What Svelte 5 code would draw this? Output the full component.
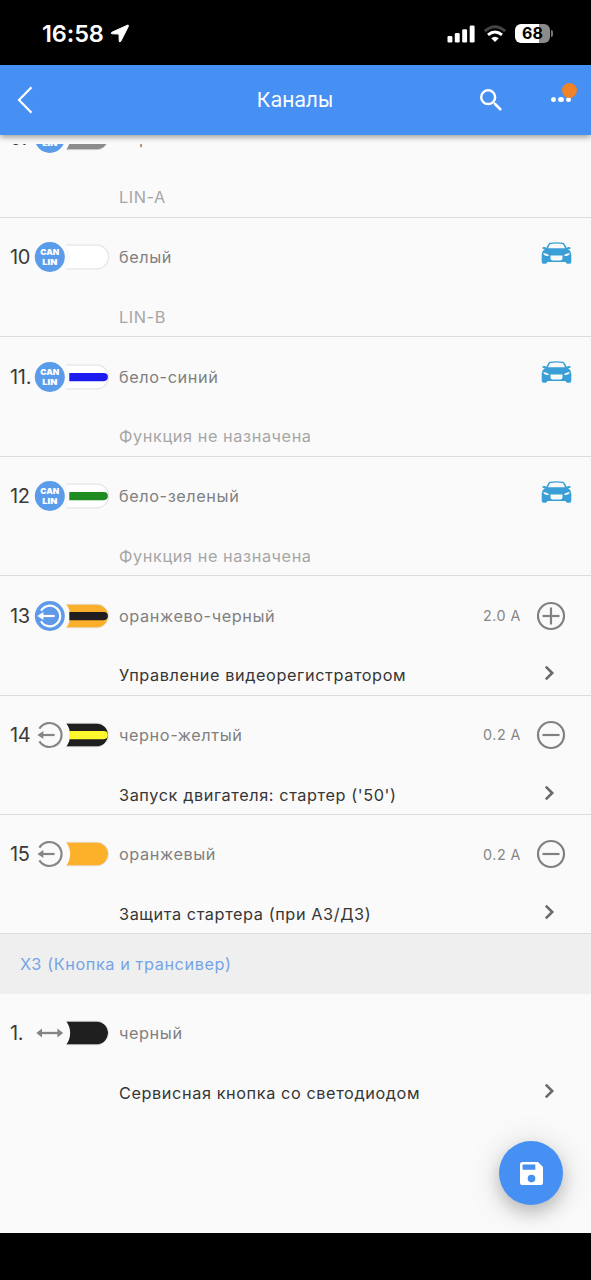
<script lang="ts">
  type Kind = 'can' | 'out-active' | 'out' | 'inout'

  interface Channel {
    num: string
    kind: Kind
    color: string
    stripe?: string
    name: string
    func: string
    car?: boolean
    amps?: string
    sign?: 'plus' | 'minus'
  }

  const channels: Channel[] = [
    { num: '9.', kind: 'can', color: '#8c8c8c', name: 'серый', func: 'LIN-A' },
    { num: '10', kind: 'can', color: '#ffffff', name: 'белый', func: 'LIN-B', car: true },
    { num: '11.', kind: 'can', color: '#ffffff', stripe: '#1c1cf0', name: 'бело-синий', func: 'Функция не назначена', car: true },
    { num: '12', kind: 'can', color: '#ffffff', stripe: '#1f8c22', name: 'бело-зеленый', func: 'Функция не назначена', car: true },
    { num: '13', kind: 'out-active', color: '#fbb02d', stripe: '#201e1e', name: 'оранжево-черный', func: 'Управление видеорегистратором', amps: '2.0 A', sign: 'plus' },
    { num: '14', kind: 'out', color: '#1f1f1f', stripe: '#fbf72c', name: 'черно-желтый', func: "Запуск двигателя: стартер ('50')", amps: '0.2 A', sign: 'minus' },
    { num: '15', kind: 'out', color: '#fdb02a', name: 'оранжевый', func: 'Защита стартера (при АЗ/ДЗ)', amps: '0.2 A', sign: 'minus' },
  ]

  const button: Channel[] = [
    { num: '1.', kind: 'inout', color: '#1f1f1f', name: 'черный', func: 'Сервисная кнопка со светодиодом' },
  ]
</script>

{#snippet wire(ch: Channel)}
  <svg class="wire" viewBox="0 0 76 32">
    <path d="M32.4 4.5H62.5a11.5 11.5 0 0 1 0 23H32.4A19.5 19.5 0 0 0 32.4 4.5z" fill={ch.color} />
    <path
      d="M32.4 4.2H62.8a11.8 11.8 0 0 1 0 23.6H32.4"
      fill="none"
      stroke={ch.color === '#ffffff' ? '#e4e4ea' : '#d8d4cc'}
      stroke-width={ch.color === '#ffffff' ? 1.2 : 0.6}
    />
    {#if ch.stripe}
      <path d="M35.3 12H69.8a4 4 0 0 1 0 8.2H35.3z" fill={ch.stripe} />
    {/if}
    {#if ch.kind === 'can'}
      <circle cx="15.8" cy="16" r="15" fill="#5a9bea" />
      <text class="can" x="15.8" y="14.3" textLength="19" lengthAdjust="spacingAndGlyphs">CAN</text>
      <text class="can" x="15.8" y="23.7" textLength="15" lengthAdjust="spacingAndGlyphs">LIN</text>
    {:else if ch.kind === 'inout'}
      <path d="M5 16h21" stroke="#858585" stroke-width="2.3" />
      <path d="M8 11.4v9.2L2.3 16zM23.4 11.4v9.2l5.700-4.600z" fill="#858585" />
    {:else}
      {#if ch.kind === 'out-active'}
        <circle cx="15.8" cy="16" r="15" fill="#5f9aea" />
      {/if}
      <g stroke={ch.kind === 'out' ? '#858585' : '#ffffff'} fill="none" stroke-width="2.2">
        {#if ch.kind === 'out'}
          <path d="M5.4 9.6A12 12 0 1 1 5.4 22.4" />
        {:else}
          <path d="M7 10.8A10.3 10.3 0 1 1 7 21.2" />
        {/if}
        <path d="M8 16h12.6" />
      </g>
      <path d="M9.4 12v8L3.4 16z" fill={ch.kind === 'out' ? '#858585' : '#ffffff'} />
    {/if}
  </svg>
{/snippet}

{#snippet row(ch: Channel)}
  <div class="row">
    <div class="line main">
      <span class="num">{ch.num}</span>
      {@render wire(ch)}
      <span class="name">{ch.name}</span>
      {#if ch.car}
        <svg class="car" viewBox="0 0 30 22" fill="#3a9fd6">
          <path
            fill-rule="evenodd"
            d="M8.6.8Q15-.4 21.4.8q1.300.3 2 1.700l1.900 3.500q.6-.9 2-.9 1.900 0 1.900 1t-1.300 1h-1.400q3.300 2.200 3.300 6.400V20q0 1.700-1.700 1.700h-2q-2 0-2-1.700H5.900q0 1.700-2 1.700h-2Q.2 21.700.2 20v-6.500q0-4.200 3.300-6.400H2.100Q.8 7.100.8 6.100t1.900-1q1.400 0 2 .9l1.900-3.500q.7-1.400 2-1.700zM9.300 2q-.9.2-1.300 1L6.500 6.200h17L22 3q-.4-.8-1.300-1Q15 1.100 9.300 2zM1.800 11q.2 3.300 5.900 3Q6.500 11.600 1.800 11zm26.400 0q-.2 3.300-5.900 3 1.200-2.400 5.900-3zM9 13.600v2.900q.3 2 2 2h8q1.700 0 2-2v-2.900z"
          />
        </svg>
      {/if}
      {#if ch.amps}
        <span class="amps">{ch.amps}</span>
        <svg class="sign" viewBox="0 0 30 30" fill="none" stroke="#808080" stroke-width="2.2">
          <circle cx="15" cy="15" r="13" />
          <path d="M6.5 15h17" />
          {#if ch.sign === 'plus'}<path d="M15 6.5v17" />{/if}
        </svg>
      {/if}
    </div>
    <div class="line sub">
      <span class="func" class:muted={ch.kind === 'can'}>{ch.func}</span>
      {#if ch.kind !== 'can'}
        <svg class="chevron" viewBox="0 0 10 16" fill="none" stroke="#6a6a6a" stroke-width="2.6">
          <path d="M1.3 1.6 7.7 8l-6.400 6.400" />
        </svg>
      {/if}
    </div>
  </div>
{/snippet}

<div class="screen">
  <div class="status">
    <span class="time">16:58</span>
    <svg class="location" viewBox="0 0 20 20" fill="#fff" stroke="#fff">
      <path d="M17.4 1.2 1.8 8.3q-1.500 1 .3 1.500l6.900.2.200 7q.5 1.800 1.600.3l7.600-15q.4-1.500-1-1.100z" />
    </svg>
    <svg class="signal" viewBox="0 0 28 18" fill="#fff">
      <rect x="0.5" y="11" width="4.9" height="6.5" rx="1.3" />
      <rect x="7.8" y="8" width="4.9" height="9.5" rx="1.3" />
      <rect x="15.2" y="4.3" width="4.9" height="13.2" rx="1.3" />
      <rect x="22.7" y="0.5" width="4.9" height="17" rx="1.3" />
    </svg>
    <svg class="wifi" viewBox="0 0 24 18" fill="none" stroke-width="3">
      <path d="M1.8 6.2Q12-2.600 22.200 6.200" stroke="#444" />
      <path d="M5 9.900q7-5.800 14 0" stroke="#fff" />
      <path d="M12 17 8.200 13.200q3.800-3 7.600 0z" fill="#fff" />
    </svg>
    <div class="battery"><span>68</span></div>
  </div>

  <header>
    <svg class="back" viewBox="0 0 16 28" fill="none" stroke="#fff" stroke-width="2.2">
      <path d="M14.5 1.2 2 14l12.500 12.800" />
    </svg>
    <h1>Каналы</h1>
    <svg class="search" viewBox="3 3 17.5 17.5" fill="#fff">
      <path d="M15.5 14h-.79l-.28-.27A6.471 6.471 0 0 0 16 9.5 6.5 6.5 0 1 0 9.5 16c1.61 0 3.09-.59 4.23-1.57l.27.28v.79l5 4.99L20.49 19l-4.99-5zm-6 0C7.01 14 5 11.99 5 9.5S7.01 5 9.5 5 14 7.01 14 9.5 11.99 14 9.5 14z" />
    </svg>
    <div class="more">
      <i></i><i></i><i></i>
      <b class="badge"></b>
    </div>
  </header>

  <main>
    <div class="list">
      {#each channels as ch}
        {@render row(ch)}
      {/each}
      <div class="section">X3 (Кнопка и трансивер)</div>
      {#each button as ch}
        {@render row(ch)}
      {/each}
    </div>
  </main>

  <button class="fab" aria-label="Сохранить">
    <svg viewBox="3 3 18 18" fill="#fff">
      <path d="M17 3H5a2 2 0 0 0-2 2v14a2 2 0 0 0 2 2h14a2 2 0 0 0 2-2V7l-4-4zm-5 16a3 3 0 1 1 0-6 3 3 0 0 1 0 6zm3-10H5V5h10v4z" />
    </svg>
  </button>
  <div class="home"></div>
</div>

<style>
  .screen {
    position: relative;
    display: flex;
    flex-direction: column;
    width: 591px;
    height: 1280px;
    overflow: hidden;
    background: #fafafa;
    font-family: Inter, "Liberation Sans", sans-serif;
  }

  .status {
    display: flex;
    align-items: center;
    flex: 0 0 65px;
    box-sizing: border-box;
    padding: 2px 38px 0 42px;
    background: #000;
    color: #fff;
  }
  .time { width: 68px; font-size: 23.5px; font-weight: 600; letter-spacing: -0.1px; }
  .location { width: 20px; height: 20px; }
  .signal { width: 28px; height: 18px; margin-left: auto; }
  .wifi { width: 24px; height: 18px; margin: 0 8px 0 8px; }
  .battery {
    position: relative;
    width: 35px;
    height: 19px;
    margin-right: 3px;
    border-radius: 6px;
    background: linear-gradient(90deg, #fff 68%, #8b8b8b 68%);
    color: #000;
    font-size: 16px;
    font-weight: 700;
    line-height: 19px;
    text-align: center;
  }
  .battery::after {
    content: '';
    position: absolute;
    left: 36px;
    top: 6px;
    width: 2px;
    height: 7px;
    border-radius: 0 2px 2px 0;
    background: #777;
  }

  header {
    position: relative;
    z-index: 1;
    display: flex;
    align-items: center;
    flex: 0 0 69.5px;
    box-sizing: border-box;
    padding: 0 20px 0 17px;
    background: #468ff3;
    box-shadow: 0 2px 6px rgba(0, 0, 0, 0.4);
    color: #fff;
  }
  .back { width: 16px; height: 28px; }
  h1 {
    flex: 1;
    margin: 0;
    padding-left: 77px;
    font-size: 20.5px;
    font-weight: 400;
    letter-spacing: 0.1px;
    text-align: center;
  }
  .search { width: 22px; height: 22px; margin-right: 49px; }
  .more { position: relative; display: flex; gap: 2.3px; width: 20px; }
  .more i { width: 5.3px; height: 5.3px; border-radius: 50%; background: #fff; }
  .badge {
    position: absolute;
    left: 11px;
    top: -14px;
    width: 15px;
    height: 15px;
    border-radius: 50%;
    background: #ee8327;
  }

  main { flex: 1; min-height: 0; padding-top: 9.5px; display: flex; }
  .list { flex: 1; overflow: hidden; }
  .list > .row:first-child { margin-top: -45.5px; }

  .row {
    box-sizing: border-box;
    height: 119.43px;
    padding-top: 9.5px;
    border-bottom: 1.5px solid #dcdcdc;
  }
  .row:last-child { border-bottom: none; }
  .line { display: flex; align-items: center; }
  .main { height: 59.7px; padding: 0 19px 0 10px; }
  .sub { height: 39.5px; margin-top: 10px; padding: 0 36px 0 119px; }

  .num { width: 24px; font-size: 20px; color: #3a3a3a; letter-spacing: -0.3px; white-space: nowrap; }
  .wire { width: 76px; height: 32px; margin-right: 9px; flex: none; }
  .can { fill: #fff; font-size: 8px; font-weight: 900; text-anchor: middle; }
  .name, .func { flex: 1; font-size: 16.3px; letter-spacing: 0.58px; white-space: nowrap; }
  .name { color: #808080; }
  .func { color: #363636; }
  .func.muted { color: #a6a6a6; }
  .car { width: 31px; height: 22px; margin-top: -9px; }
  .amps { font-size: 14.3px; letter-spacing: 0.5px; color: #868686; }
  .sign { width: 30px; height: 30px; margin: 0 6px 0 15px; }
  .chevron { width: 11px; height: 16px; margin-top: -4px; }

  .section {
    height: 59.7px;
    padding-left: 20px;
    background: #efefef;
    color: #75a4e6;
    font-size: 16.3px;
    letter-spacing: 0.58px;
    line-height: 60.2px;
  }

  .fab {
    position: absolute;
    right: 28px;
    bottom: 75px;
    display: flex;
    align-items: center;
    justify-content: center;
    width: 64px;
    height: 64px;
    padding: 0;
    border: none;
    border-radius: 50%;
    background: #468ff3;
    box-shadow: 0 8px 16px rgba(0, 0, 0, 0.18), 0 4px 34px rgba(0, 0, 0, 0.15);
  }
  .fab svg { width: 23px; height: 23px; }

  .home { position: relative; flex: 0 0 47px; background: #000; }
</style>
